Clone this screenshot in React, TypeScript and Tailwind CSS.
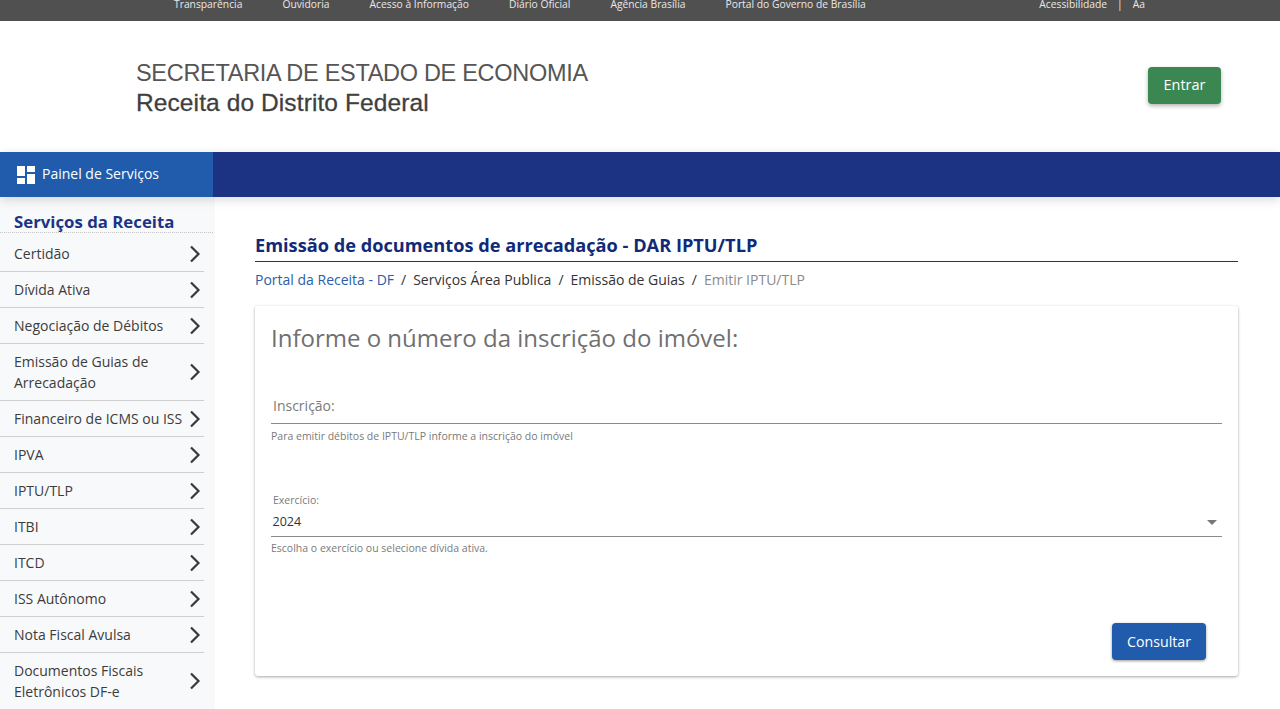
const topLinks = [
  "Transparência",
  "Ouvidoria",
  "Acesso à Informação",
  "Diário Oficial",
  "Agência Brasília",
  "Portal do Governo de Brasília",
];

const menuItems = [
  ["Certidão"],
  ["Dívida Ativa"],
  ["Negociação de Débitos"],
  ["Emissão de Guias de", "Arrecadação"],
  ["Financeiro de ICMS ou ISS"],
  ["IPVA"],
  ["IPTU/TLP"],
  ["ITBI"],
  ["ITCD"],
  ["ISS Autônomo"],
  ["Nota Fiscal Avulsa"],
  ["Documentos Fiscais", "Eletrônicos DF-e"],
];

const TopBar = () => (
  <div className="flex h-[21px] items-start justify-between overflow-hidden bg-[#505050] pl-[174px] pr-[135px] text-[10.3px] leading-[10px] text-[#e8e8e8]">
    <div className="-mt-[1px] flex gap-[40px]">
      {topLinks.map((link) => (
        <span key={link}>{link}</span>
      ))}
    </div>
    <div className="-mt-[1px] flex gap-[10px]">
      <span>Acessibilidade</span>
      <span>|</span>
      <span>Aa</span>
    </div>
  </div>
);

const Header = () => (
  <div className="flex h-[131px] items-center justify-between bg-white pl-[136px] pr-[59px]">
    <div className="mt-[2px] font-['Liberation_Sans',sans-serif]">
      <div className="text-[23.5px] leading-[30px] font-light tracking-[-0.3px] text-[#555]">
        SECRETARIA DE ESTADO DE ECONOMIA
      </div>
      <div className="text-[24.5px] leading-[30px] tracking-[0.1px] text-[#3f3f3f] [-webkit-text-stroke:0.3px_#3f3f3f]">
        Receita do Distrito Federal
      </div>
    </div>
    <button className="-mt-[2px] h-[37px] w-[73px] rounded-[4px] bg-[#3b8751] pb-[1px] text-[14.5px] text-white shadow-[0_2px_4px_rgba(0,0,0,0.3)]">
      Entrar
    </button>
  </div>
);

const BlueBar = () => (
  <div className="relative z-10 flex h-[45px] bg-[#1c3384] shadow-[0_3px_10px_rgba(0,0,0,0.14)]">
    <div className="flex w-[213px] items-center gap-[7px] bg-[#215cac] pl-[17px] text-[14px] text-white">
      <svg width="18" height="18" viewBox="0 0 18 18" fill="white">
        <rect x="0" y="0" width="8" height="10" />
        <rect x="10" y="0" width="8" height="6" />
        <rect x="0" y="12" width="8" height="6" />
        <rect x="10" y="8" width="8" height="10" />
      </svg>
      <span className="-mt-[2px]">Painel de Serviços</span>
    </div>
  </div>
);

const Sidebar = () => (
  <div className="w-[213px] shrink-0 bg-[#f8f9fb] shadow-[1px_0_2px_rgba(0,0,0,0.05)]">
    <div className="mb-[3px] h-[36px] border-b border-dotted border-[#c4c4c4] pl-[14px] pt-[14px] text-[16.8px] leading-[22px] font-bold text-[#1c3384]">
      <span className="whitespace-nowrap">Serviços da Receita</span>
    </div>
    {menuItems.map((lines) => (
      <div
        key={lines[0]}
        className="mr-[9px] flex items-center justify-between border-b border-[#cfcfcf] py-[7px] pl-[14px] pr-[3px] text-[14px] leading-[21px] text-[#3c3c3c]"
      >
        <div>
          {lines.map((line) => (
            <div key={line} className="whitespace-nowrap">
              {line}
            </div>
          ))}
        </div>
        <svg
          width="12"
          height="18"
          viewBox="0 0 12 18"
          fill="none"
          stroke="#3a3a3a"
          strokeWidth="2.2"
          className="shrink-0"
        >
          <path d="M2 1.5 9.5 9 2 16.5" />
        </svg>
      </div>
    ))}
  </div>
);

const Content = () => (
  <div className="flex-1 pl-[42px] pr-[42px] pt-[36px]">
    <div className="border-b border-[#1c3384] pb-[4px] text-[18.2px] leading-[24px] font-bold text-[#102a77]">
      Emissão de documentos de arrecadação - DAR IPTU/TLP
    </div>
    <div className="mt-[8px] flex gap-[7px] text-[14px] leading-[20px] text-[#333]">
      <span className="text-[#2a5ea8]">Portal da Receita - DF</span>
      <span>/</span>
      <span>Serviços Área Publica</span>
      <span>/</span>
      <span>Emissão de Guias</span>
      <span>/</span>
      <span className="text-[#8a8a8a]">Emitir IPTU/TLP</span>
    </div>
    <div className="mt-[16px] h-[370px] rounded-[3px] bg-white px-[16px] pt-[15px] shadow-[0_1px_3px_rgba(0,0,0,0.35)]">
      <div className="text-[24px] leading-[34px] text-[#707070]">
        Informe o número da inscrição do imóvel:
      </div>
      <div className="mt-[40px] border-b border-[#8a8a8a] pb-[6px] pl-[2px] text-[14px] leading-[22px] text-[#7a7a7a]">
        Inscrição:
      </div>
      <div className="mt-[5px] text-[10.5px] leading-[14px] text-[#7a7a7a]">
        Para emitir débitos de IPTU/TLP informe a inscrição do imóvel
      </div>
      <div className="mt-[50px] pl-[2px] text-[10.5px] leading-[14px] text-[#7a7a7a]">Exercício:</div>
      <div className="mt-[5px] flex items-center justify-between border-b border-[#8a8a8a] pb-[4px] pl-[1.5px] pr-[5px] text-[12.5px] leading-[20px] text-[#333]">
        <span>2024</span>
        <span className="h-0 w-0 border-x-[5.5px] border-t-[5.5px] border-x-transparent border-t-[#777]" />
      </div>
      <div className="mt-[4px] text-[10.5px] leading-[14px] text-[#7a7a7a]">
        Escolha o exercício ou selecione dívida ativa.
      </div>
      <div className="mt-[68px] flex justify-end pr-[16px]">
        <button className="h-[37px] w-[94px] rounded-[4px] bg-[#215cac] text-[14.2px] text-white shadow-[0_1px_3px_rgba(0,0,0,0.4)]">
          Consultar
        </button>
      </div>
    </div>
  </div>
);

export default function App() {
  return (
    <div className="h-[709px] overflow-hidden bg-white font-['Open_Sans',sans-serif]">
      <TopBar />
      <Header />
      <BlueBar />
      <div className="flex">
        <Sidebar />
        <Content />
      </div>
    </div>
  );
}
